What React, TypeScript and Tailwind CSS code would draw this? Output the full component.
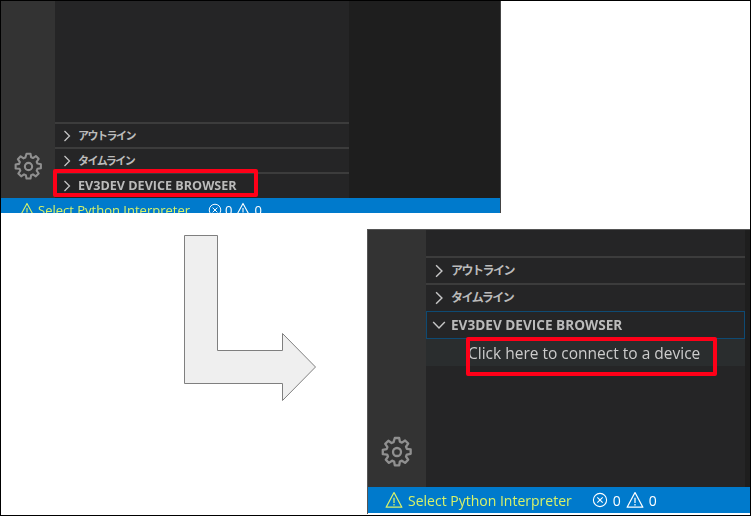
import React from "react";

const FONT = "font-['Open_Sans','Noto_Sans_CJK_JP',sans-serif]";

function Gear({ size }: { size: number }) {
  return (
    <svg width={size} height={size} viewBox="0 0 16 16" fill="none" stroke="#909090" strokeWidth="1.15" strokeLinejoin="round">
      <path d="M6.9 1h2.2l.35 1.9 1 .42 1.6-1.1 1.56 1.56-1.1 1.6.42 1 1.9.35v2.2l-1.9.35-.42 1 1.1 1.6-1.56 1.56-1.6-1.1-1 .42-.35 1.9H6.9l-.35-1.9-1-.42-1.6 1.1-1.56-1.56 1.1-1.6-.42-1L.9 9.1V6.9l1.9-.35.42-1-1.1-1.6 1.56-1.56 1.6 1.1 1-.42z" />
      <circle cx="8" cy="8" r="2" />
    </svg>
  );
}

function Chevron({ size, down }: { size: number; down?: boolean }) {
  return (
    <svg width={size} height={size} viewBox="0 0 12 12" fill="none" stroke="#c5c5c5" strokeWidth="1.25" className="shrink-0">
      {down ? <path d="M1 3.5l5 5 5-5" /> : <path d="M3.5 1l5 5-5 5" />}
    </svg>
  );
}

function Warn({ size, color }: { size: number; color: string }) {
  return (
    <svg width={size} height={size} viewBox="0 0 16 16" fill="none" stroke={color} strokeWidth="1.1" strokeLinejoin="round" className="shrink-0">
      <path d="M8 1.4l7 13H1z" />
      <path d="M8 6v4.6M8 11.6v1.2" />
    </svg>
  );
}

function ErrorIcon({ size }: { size: number }) {
  return (
    <svg width={size} height={size} viewBox="0 0 16 16" fill="none" stroke="#ffffff" strokeWidth="1.1" className="shrink-0">
      <circle cx="8" cy="8" r="6.6" />
      <path d="M5.3 5.3l5.4 5.4M10.7 5.3l-5.4 5.4" />
    </svg>
  );
}

function Row({ label, h, chev, text, gap }: { label: string; h: string; chev: number; text: string; gap: string }) {
  return (
    <div className={`${h} flex items-center border-t-2 border-[#3c3c3c] pl-[6px] ${gap}`}>
      <Chevron size={chev} />
      <span className={`${text} whitespace-nowrap font-bold text-[#bbbbbb]`}>{label}</span>
    </div>
  );
}

export default function App() {
  return (
    <div className={`${FONT} relative h-[518px] w-[751px] overflow-hidden bg-white`}>
      <div className="flex h-[516px] w-[751px] flex-col border border-black">
        {/* upper capture */}
        <div className="flex h-[212px] w-[500px] flex-col overflow-hidden border-r border-[#444444] blur-[0.35px]">
          <div className="flex h-[197px]">
            <div className="flex w-[54px] flex-col items-center justify-end bg-[#333333] pb-[17px]">
              <Gear size={29} />
            </div>
            <div className="flex w-[294px] flex-col justify-end bg-[#252526]">
              <Row label="アウトライン" h="h-[25px]" chev={12} text="text-[11px] tracking-[-1.5px] pt-[2px]" gap="gap-[5px]" />
              <Row label="タイムライン" h="h-[25px]" chev={12} text="text-[11px] tracking-[-1.5px] pt-[2px]" gap="gap-[5px]" />
              <Row label="EV3DEV DEVICE BROWSER" h="h-[26px]" chev={12} text="text-[12.6px]" gap="gap-[5px]" />
            </div>
            <div className="flex-1 bg-[#1e1e1e]" />
          </div>
          <div className="flex h-[15px] items-start gap-[18px] overflow-hidden bg-[#007acc] pl-[18px] text-[13px] leading-[15px]">
            <div className="flex items-center gap-[3px] pt-[4px] text-[#d7f26a]">
              <Warn size={16} color="#d7f26a" />
              <span className="whitespace-nowrap">Select Python Interpreter</span>
            </div>
            <div className="flex items-center gap-[3px] pt-[4px] text-white">
              <ErrorIcon size={14} />
              <span>0</span>
              <Warn size={16} color="#ffffff" />
              <span>0</span>
            </div>
          </div>
        </div>

        {/* lower capture */}
        <div className="mt-[16px] flex justify-end">
          <div className="flex h-[285px] w-[383px] flex-col border-l border-t border-[#555555] blur-[0.35px]">
            <div className="flex h-[257px]">
              <div className="flex w-[58px] flex-col items-center justify-end bg-[#333333] pb-[19px]">
                <Gear size={32} />
              </div>
              <div className="flex w-[319px] flex-col bg-[#252526] pt-[26px]">
                <Row label="アウトライン" h="h-[27px]" chev={14} text="text-[12px] tracking-[-1.5px]" gap="gap-[5px]" />
                <Row label="タイムライン" h="h-[28px]" chev={14} text="text-[12px] tracking-[-1.5px]" gap="gap-[5px]" />
                <div className="flex h-[28px] items-center gap-[5px] border border-[#0e4a73] pl-[5px]">
                  <Chevron size={14} down />
                  <span className="whitespace-nowrap text-[13.6px] font-bold text-[#bbbbbb]">EV3DEV DEVICE BROWSER</span>
                </div>
                <div className="flex h-[27px] items-center bg-[#2a2d2e] pl-[42px] pt-[2px] text-[15.5px] whitespace-nowrap text-[#cccccc]">
                  Click here to connect to a device
                </div>
              </div>
              <div className="flex-1 bg-[#1e1e1e]" />
            </div>
            <div className="flex h-[26px] items-center bg-[#007acc] pl-[17px] text-[14px]">
              <div className="flex items-center gap-[5px] text-[#d7f26a]">
                <Warn size={18} color="#d7f26a" />
                <span className="whitespace-nowrap">Select Python Interpreter</span>
              </div>
              <div className="ml-[20px] flex items-center gap-[5px] text-white">
                <ErrorIcon size={16} />
                <span>0</span>
                <Warn size={18} color="#ffffff" />
                <span>0</span>
              </div>
            </div>
          </div>
        </div>
      </div>

      {/* arrow between the captures */}
      <svg className="absolute left-0 top-0" width="751" height="518" fill="none">
        <path d="M184.5 235.5H217.5V350.5H282.5V333.5L315.5 367L282.5 400.5V383.5H184.5Z" fill="#efefef" stroke="#7f7f7f" strokeWidth="1" />
      </svg>

      {/* red highlights */}
      <div className="absolute left-[53px] top-[169px] h-[28px] w-[205px] rounded-[2px] border-[4px] border-[#ff0018]" />
      <div className="absolute left-[466px] top-[337px] h-[39px] w-[251px] rounded-[2px] border-[4px] border-[#ff0018]" />
    </div>
  );
}
